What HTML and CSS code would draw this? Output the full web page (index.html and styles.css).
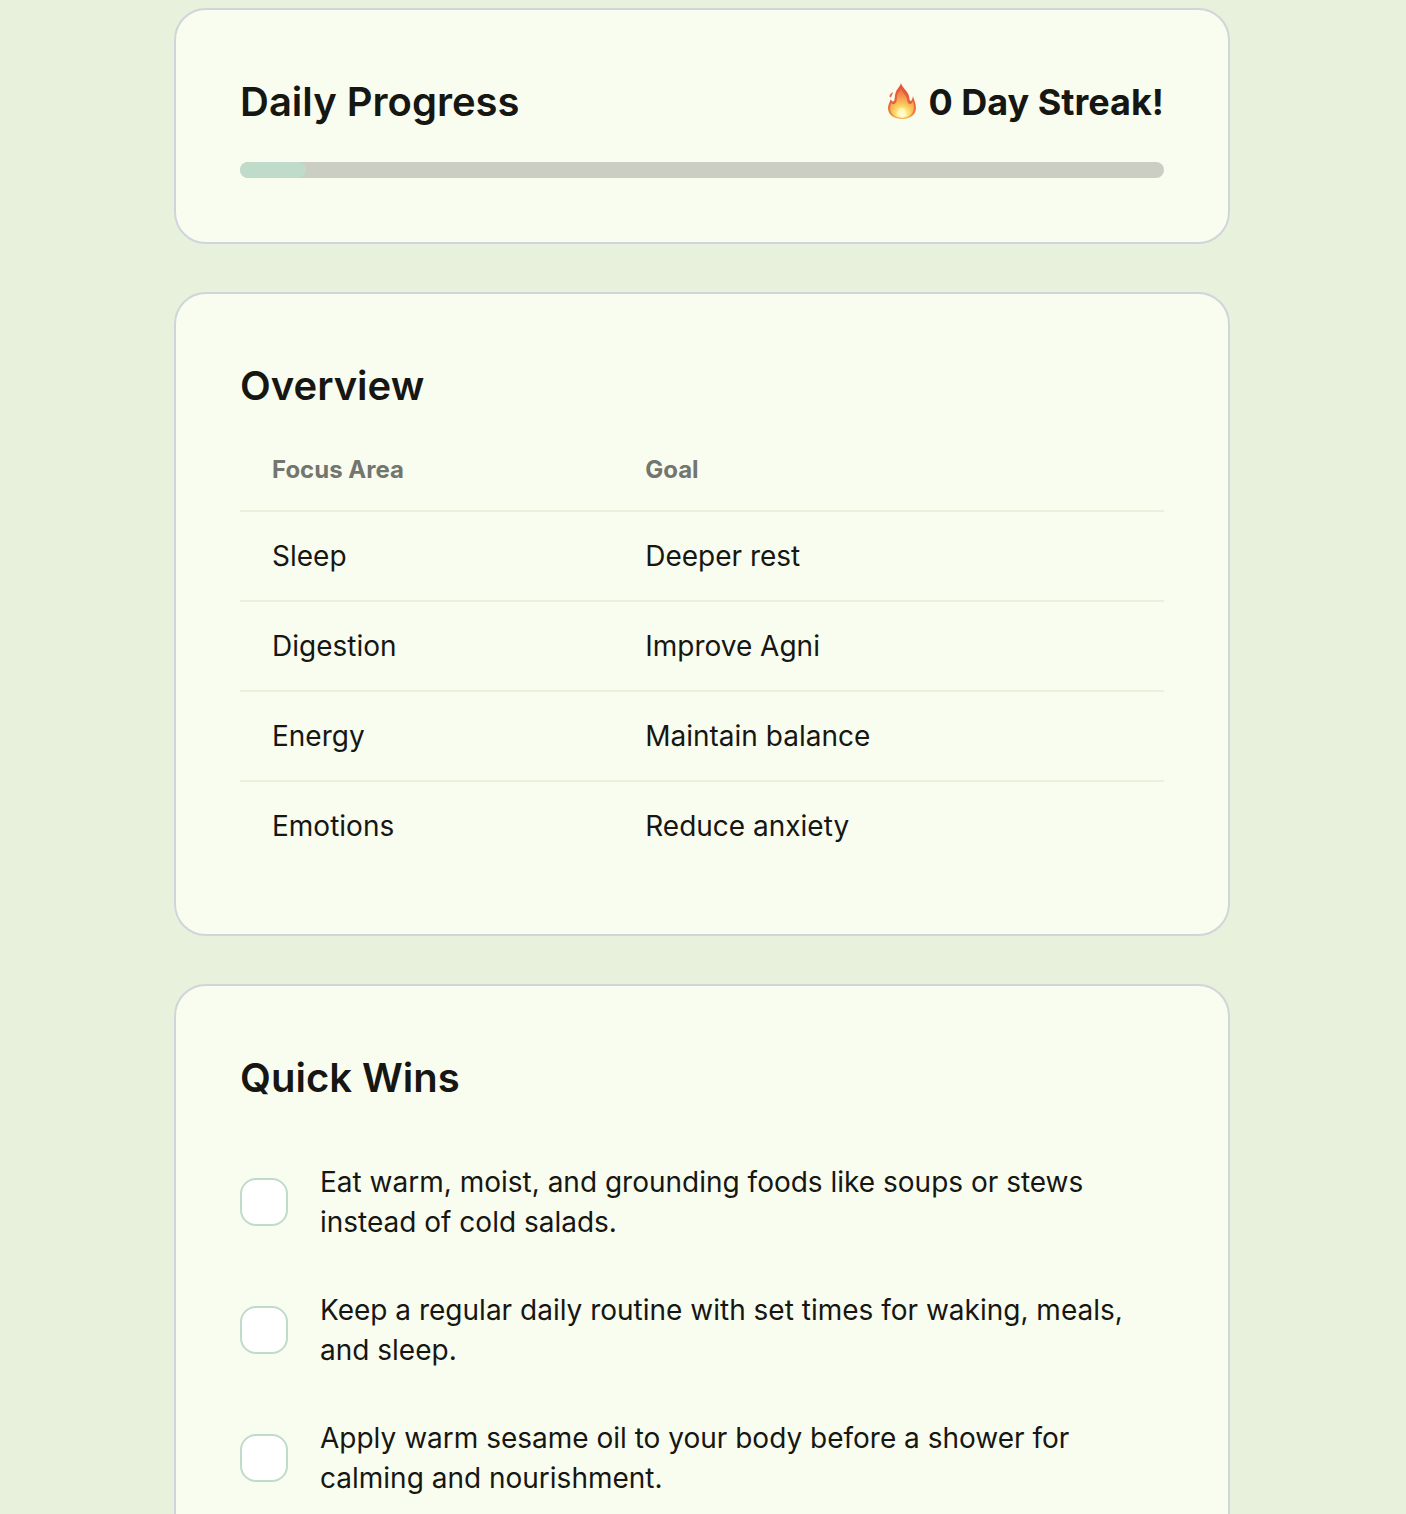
FILE: index.html
```html
<!DOCTYPE html>
<html lang="en">
<head>
<meta charset="utf-8">
<meta name="viewport" content="width=device-width, initial-scale=1">
<title>Daily Progress</title>
<link rel="stylesheet" href="styles.css">
</head>
<body>
<main class="page">
  <section class="card">
    <header class="card-header">
      <h2 class="title" id="progress-title">Daily Progress</h2>
      <p class="streak">
        <svg class="flame" viewBox="0 0 30 38" aria-hidden="true">
          <defs>
            <linearGradient id="flame-outer" x1="0" y1="0" x2="0" y2="1">
              <stop offset="0" stop-color="#e2553a"/>
              <stop offset="0.6" stop-color="#e9633a"/>
              <stop offset="0.85" stop-color="#ee8440"/>
              <stop offset="1" stop-color="#f3b65c"/>
            </linearGradient>
            <radialGradient id="flame-inner" gradientUnits="userSpaceOnUse" cx="15" cy="31" r="24">
              <stop offset="0" stop-color="#fffde0"/>
              <stop offset="0.18" stop-color="#fff08a"/>
              <stop offset="0.42" stop-color="#fcc65a"/>
              <stop offset="0.7" stop-color="#f59a50"/>
              <stop offset="1" stop-color="#ea7048"/>
            </radialGradient>
          </defs>
          <path fill="url(#flame-outer)" d="M14 0C14.500 4 21 8 22 13C22.500 15.500 22.500 18 23.500 18C25 18 25.500 15 26 13C26.500 16 29 20 29 25C29 32 23 36 15 36C7 36 1 32 1 25C1 22 2.500 20 3.500 16.500C4.500 17 5 18.500 6 18.500C8 18.500 7.500 14 8.500 10C9.500 6 13 4 14 0Z"/>
          <path fill="#ea6a4a" d="M5.500 9C6.300 10.500 5 11.500 4.300 13.500C3.800 14.800 2.500 14.500 2.500 13.200C2.500 11.500 4 10.500 5.500 9Z"/>
          <path fill="url(#flame-inner)" d="M14 5C14.500 9 19.500 12 20.200 17C20.600 20 21.500 21.500 23.500 21C25 20.500 25.500 19 26 18C27.500 23 27.500 29 23 32.500C19 35.500 11 35.500 7 32.500C2.500 29 2.500 24 4.200 20C5 21.500 6.500 21.500 8 20.500C11 18 9 13 11 10C12 8.500 13.500 7 14 5Z"/>
          <ellipse fill="#fffbd0" opacity="0.600" cx="15" cy="30" rx="4.500" ry="5"/>
        </svg>
        <span>0 Day Streak!</span>
      </p>
    </header>
    <div class="progress" role="progressbar" aria-labelledby="progress-title" aria-valuemin="0" aria-valuemax="14" aria-valuenow="1">
      <div class="progress-fill" style="width: 7.14%"></div>
    </div>
  </section>

  <section class="card">
    <h2 class="title">Overview</h2>
    <table class="overview">
      <thead>
        <tr><th scope="col">Focus Area</th><th scope="col">Goal</th></tr>
      </thead>
      <tbody>
        <tr><td>Sleep</td><td>Deeper rest</td></tr>
        <tr><td>Digestion</td><td>Improve Agni</td></tr>
        <tr><td>Energy</td><td>Maintain balance</td></tr>
        <tr><td>Emotions</td><td>Reduce anxiety</td></tr>
      </tbody>
    </table>
  </section>

  <section class="card">
    <h2 class="title">Quick Wins</h2>
    <ul class="wins">
      <li class="win">
        <input class="check" type="checkbox" id="win-food">
        <label for="win-food">Eat warm, moist, and grounding foods like soups or stews instead of cold salads.</label>
      </li>
      <li class="win">
        <input class="check" type="checkbox" id="win-routine">
        <label for="win-routine">Keep a regular daily routine with set times for waking, meals, and sleep.</label>
      </li>
      <li class="win">
        <input class="check" type="checkbox" id="win-oil">
        <label for="win-oil">Apply warm sesame oil to your body before a shower for calming and nourishment.</label>
      </li>
    </ul>
  </section>
</main>
</body>
</html>
```
FILE: styles.css
```css
*,
*::before,
*::after {
  box-sizing: border-box;
}

body {
  margin: 0;
  background: #e8f1dc;
  color: #161613;
  font-family: Inter, "Liberation Sans", sans-serif;
  font-size: 28px;
  line-height: 40px;
}

.page {
  display: flex;
  flex-direction: column;
  gap: 48px;
  padding: 8px 176px 48px 174px;
}

.card {
  padding: 64px;
  background: #f9fdef;
  border: 2px solid #d1d5db;
  border-radius: 32px;
}

.card-header {
  display: flex;
  align-items: center;
  justify-content: space-between;
  margin-bottom: 32px;
}

.title {
  margin: 0;
  font-size: 40px;
  font-weight: 600;
  line-height: 56px;
}

.streak {
  display: flex;
  align-items: center;
  gap: 11px;
  margin: 0;
  font-size: 36px;
  font-weight: 700;
  line-height: 56px;
}

.flame {
  width: 30px;
  height: 38px;
}

.progress {
  height: 16px;
  overflow: hidden;
  background: #cbcec3;
  border-radius: 8px;
}

.progress-fill {
  height: 100%;
  background: #bfdbc9;
  border-radius: 8px;
}

.overview {
  width: 100%;
  margin-top: 16px;
  border-collapse: separate;
  border-spacing: 0;
  text-align: left;
}

.overview th,
.overview td {
  padding: 24px 32px;
  border-bottom: 2px solid #e8f1dc;
}

.overview th {
  color: #73756f;
  font-size: 24px;
  font-weight: 700;
  line-height: 32px;
}

.overview tbody tr:last-child td {
  border-bottom: 0;
}

.wins {
  margin: 32px 0 0;
  padding: 0;
  list-style: none;
}

.win {
  display: flex;
  align-items: center;
  gap: 32px;
  padding: 24px 0;
}

.check {
  flex: none;
  width: 48px;
  height: 48px;
  margin: 0;
  appearance: none;
  background: #fff;
  border: 2px solid #bfdbc9;
  border-radius: 16px;
}

.check:checked {
  background: #bfdbc9;
}
```
